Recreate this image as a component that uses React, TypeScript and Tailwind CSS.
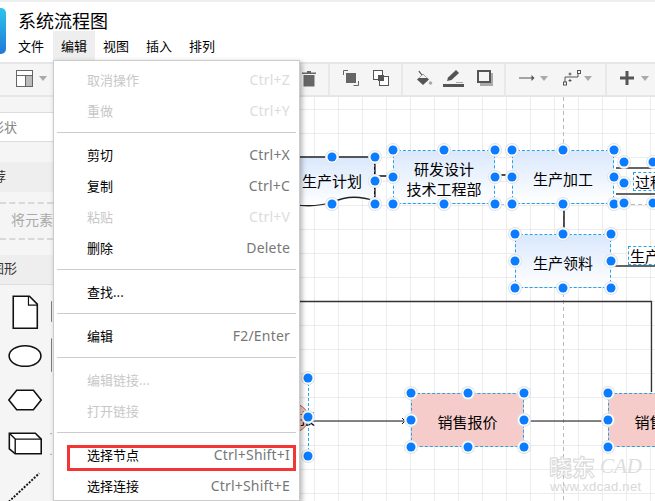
import React from "react";

const CJK = "font-['Noto_Sans_CJK_SC','Noto_Sans',sans-serif]";

function Caret() {
  return <span className="block w-0 h-0 border-x-[4px] border-x-transparent border-t-[5px] border-t-[#aaa]" />;
}

function Sep({ className }: { className: string }) {
  return <span className={"block w-[2px] self-stretch -mb-[3px] bg-[#e8e8e8] " + className} />;
}

function Handle({ className }: { className: string }) {
  return (
    <span
      className={
        "absolute w-[9px] h-[9px] rounded-full bg-[#0a7cff] -translate-x-1/2 -translate-y-1/2 shadow-[0_0_0_1.5px_#fff,0_0_0_2.5px_#e2e2e2] " +
        className
      }
    />
  );
}

function Handles() {
  return (
    <>
      <Handle className="left-0 top-0" />
      <Handle className="left-1/2 top-0" />
      <Handle className="left-full top-0" />
      <Handle className="left-0 top-1/2" />
      <Handle className="left-full top-1/2" />
      <Handle className="left-0 top-full" />
      <Handle className="left-1/2 top-full" />
      <Handle className="left-full top-full" />
    </>
  );
}

function Node({ box, face, children }: { box: string; face?: string; children?: React.ReactNode }) {
  return (
    <div className={"absolute " + box}>
      <div className={"absolute inset-0 flex items-center justify-center text-center text-[15px] leading-[20px] text-black " + (face ?? "")}>
        {children}
      </div>
      <Handles />
    </div>
  );
}

function MenuRow({ label, keys, disabled }: { label: string; keys?: string; disabled?: boolean }) {
  return (
    <div className="flex items-center justify-between h-[31px] pl-[33px] pr-[9px] text-[13px]">
      <span className={"relative -top-px " + (disabled ? "text-[#c8c8c8]" : "text-black")}>{label}</span>
      {keys && (
        <span className={"relative -top-px text-[14px] tracking-[0.2px] font-['Noto_Sans',sans-serif] " + (disabled ? "text-[#dcdcdc]" : "text-[#777]")}>
          {keys}
        </span>
      )}
    </div>
  );
}

function MenuSep() {
  return <div className="h-px bg-[#ccc] mt-[5px] mb-[7px] mx-[3px]" />;
}

function TopMenu({ label, className }: { label: string; className?: string }) {
  return (
    <span className={"flex items-center h-[29px] px-[8px] text-[13px] text-black " + (className ?? "mr-px")}>
      {label}
    </span>
  );
}

const blueFace = "border border-dashed border-[#29a3e8] bg-gradient-to-b from-[#dae8fc] to-white";
const redFace = "rounded-[6px] border border-dashed border-[#29a3e8] bg-[#f5ccc9]";

export default function App() {
  return (
    <div className={"relative w-[655px] h-[501px] overflow-hidden bg-white flex flex-col " + CJK}>
      {/* header */}
      <header className="h-[62px] shrink-0 border-t-2 border-[#eee] flex">
        <div className="w-[6px] h-[46px] mt-[6px] rounded-r-[5px] bg-gradient-to-b from-[#2fc4ea] to-[#2477d9]" />
        <div className="ml-[4px] flex flex-col">
          <div className="pl-[8px] mt-[6px] h-[23px] text-[18px] leading-[24px] text-black">系统流程图</div>
          <nav className="flex">
            <TopMenu label="文件" />
            <TopMenu label="编辑" className="bg-[#eee]" />
            <TopMenu label="视图" />
            <TopMenu label="插入" />
            <TopMenu label="排列" />
          </nav>
        </div>
      </header>

      {/* toolbar */}
      <div className="h-[35px] shrink-0 flex items-center pb-[3px] bg-[#f5f5f5] border-y-2 border-[#e6e6e6]">
        <svg className="ml-[16px]" width="17" height="17" viewBox="0 0 17 17">
          <rect x="0.5" y="0.5" width="16" height="16" fill="#fff" stroke="#666" />
          <rect x="10" y="5" width="6" height="11" fill="#bbb" />
          <path d="M0.5 5.5H16.5M9.5 5.5V16.5" stroke="#666" fill="none" />
        </svg>
        <span className="ml-[6px]"><Caret /></span>
        <svg className="ml-[255px]" width="14" height="17" viewBox="0 0 14 17">
          <path d="M0 2.5H14V4H0ZM5 1H9V2.5H5Z" fill="#666" />
          <path d="M1.5 5H12.5V16.5H1.5Z" fill="#666" />
        </svg>
        <Sep className="ml-[12px]" />
        <svg className="ml-[13px]" width="16" height="16" viewBox="0 0 16 16">
          <path d="M0.5 5V0.5H5M10.5 15.5H15.5V11" stroke="#666" fill="none" />
          <rect x="3" y="3" width="10" height="10" fill="#666" />
        </svg>
        <svg className="ml-[14px]" width="16" height="16" viewBox="0 0 16 16">
          <rect x="0.5" y="0.5" width="9" height="9" fill="#fff" stroke="#555" />
          <rect x="6.5" y="6.5" width="9" height="9" fill="#fff" stroke="#555" />
          <rect x="5" y="5" width="6" height="6" fill="#555" />
        </svg>
        <Sep className="ml-[12px]" />
        <svg className="ml-[13px]" width="17" height="17" viewBox="0 0 17 17">
          <path d="M7 4L13 9.5L7 15L1 9.5Z" fill="#555" />
          <path d="M3 1C4 3 6 5 8 7" stroke="#555" strokeWidth="1.2" fill="none" />
          <path d="M3 8L7 4.5L11 8Z" fill="#f5f5f5" />
          <circle cx="14.5" cy="13" r="1.8" fill="#aaa" />
        </svg>
        <svg className="ml-[10px]" width="22" height="18" viewBox="0 0 22 18">
          <rect x="0" y="15" width="21" height="3" fill="#555" />
          <path d="M4 12L5 8.5L13 1L16 4L8.5 11Z" fill="#555" />
          <path d="M13 13.5H20" stroke="#aaa" />
        </svg>
        <svg className="ml-[12px]" width="16" height="16" viewBox="0 0 16 16">
          <rect x="3" y="3" width="13" height="13" fill="#aaa" />
          <rect x="1" y="1" width="12" height="11" fill="#f5f5f5" stroke="#555" strokeWidth="2" />
        </svg>
        <Sep className="ml-[11px]" />
        <svg className="ml-[13px]" width="16" height="10" viewBox="0 0 16 10">
          <path d="M0 5H13" stroke="#555" />
          <path d="M12.5 2L15.5 5L12.5 8Z" fill="#555" />
        </svg>
        <span className="ml-[5px]"><Caret /></span>
        <svg className="ml-[15px]" width="18" height="16" viewBox="0 0 18 16">
          <rect x="0.5" y="12" width="3" height="3" fill="none" stroke="#555" />
          <rect x="14.5" y="0.5" width="3" height="3" fill="none" stroke="#555" />
          <path d="M2 12V7H15V3M7 2.5V5.5M5.5 4H8.5M7 9V12M5.5 10.5H8.5" stroke="#555" fill="none" />
        </svg>
        <span className="ml-[3px]"><Caret /></span>
        <Sep className="ml-[13px]" />
        <svg className="ml-[13px]" width="14" height="14" viewBox="0 0 14 14">
          <path d="M5.5 0H8.5V5.5H14V8.5H8.5V14H5.5V8.5H0V5.5H5.5Z" fill="#555" />
        </svg>
        <span className="ml-[7px]"><Caret /></span>
      </div>

      {/* body */}
      <div className="flex-1 flex min-h-0">
        <aside className="w-[54px] shrink-0 bg-[#f5f5f5] border-r border-[#ccc] overflow-hidden">
          <div className="h-[15px]" />
          <div className="h-[30px] bg-white border-y border-[#ddd] flex items-center text-[13px] text-[#888] -ml-[9px]">
            形状
          </div>
          <div className="h-[20px]" />
          <div className="h-[30px] bg-[#eee] flex items-center pb-[2px] -ml-[7px] text-[13px] text-[#333] whitespace-nowrap">荐</div>
          <div className="h-[10px]" />
          <div className="h-[38px] border-y-2 border-dashed border-[#d8d8d8] flex items-center pb-[3px] pl-[11px] text-[14px] text-[#aaa] whitespace-nowrap">
            将元素拖
          </div>
          <div className="h-[15px]" />
          <div className="h-[30px] bg-[#eee] border-b border-[#ddd] flex items-center pb-[3px] -ml-[9px] text-[13px] text-[#333] whitespace-nowrap">
            图形
          </div>
          <div className="mt-[5px] flex flex-col">
            <div className="h-[44px] flex items-center">
              <svg width="54" height="44" viewBox="0 0 54 44">
                <path d="M13.5 6H30L38 14V38.5H13.5Z" fill="#fff" stroke="#111" strokeWidth="1.6" />
                <path d="M29 6V15H38" fill="none" stroke="#111" strokeWidth="1.2" />
                <path d="M52.5 11V32" stroke="#777" strokeWidth="1" />
              </svg>
            </div>
            <div className="h-[44px] flex items-center">
              <svg width="54" height="44" viewBox="0 0 54 44">
                <ellipse cx="25.5" cy="22" rx="16.2" ry="10.5" fill="#fff" stroke="#111" strokeWidth="1.6" />
                <path d="M52.5 4V38" stroke="#777" strokeWidth="1" />
              </svg>
            </div>
            <div className="h-[44px] flex items-center">
              <svg width="54" height="44" viewBox="0 0 54 44">
                <path d="M9 22L17 12H34L42 22L34 32H17Z" fill="#fff" stroke="#111" strokeWidth="1.6" />
              </svg>
            </div>
            <div className="h-[44px] flex items-center">
              <svg width="54" height="44" viewBox="0 0 54 44">
                <path d="M9.5 11H36L42 17V32H15.5L9.5 27Z" fill="#fff" stroke="#111" strokeWidth="1.6" />
                <path d="M9.5 11L15.5 17V32M15.5 17H42" fill="none" stroke="#111" strokeWidth="1.4" />
                <path d="M52 11V12M52 32V33" stroke="#555" strokeWidth="1" />
              </svg>
            </div>
            <div className="h-[44px] flex items-center">
              <svg width="54" height="44" viewBox="0 0 54 44">
                <path d="M9 36L40 7" stroke="#111" strokeWidth="2" strokeDasharray="2 1.5" fill="none" />
              </svg>
            </div>
          </div>
        </aside>

        {/* canvas */}
        <main className="relative flex-1 overflow-hidden bg-white bg-[linear-gradient(#ececec_1px,transparent_1px),linear-gradient(90deg,#ececec_1px,transparent_1px)] bg-[size:24px_24px] bg-[position:20px_12px]">
          <svg className="absolute -left-[54px] -top-[97px] w-[655px] h-[501px]" viewBox="0 0 655 501">
            <defs>
              <linearGradient id="wave" x1="0" y1="0" x2="0" y2="1">
                <stop offset="0" stopColor="#dae8fc" />
                <stop offset="1" stopColor="#ffffff" />
              </linearGradient>
            </defs>
            <path d="M563.5 97V501" stroke="#bbb" strokeDasharray="4 3" fill="none" />
            <path d="M500 204.5H510M617 204.5H655" stroke="#bbb" strokeDasharray="4 3" fill="none" />
            <path d="M289 157H375V201Q352 193 333 202Q310 209 289 203Z" fill="url(#wave)" stroke="#222" strokeWidth="1.3" />
            <path d="M378 176H390M499 175H508M564 208V230" stroke="#111" strokeWidth="1.4" fill="none" />
            <path d="M616 168H655M616 194H655M614 266H655" stroke="#333" strokeWidth="1.4" fill="none" />
            <path d="M300 301.5H651.5V392" stroke="#333" strokeWidth="1.3" fill="none" />
            <ellipse cx="270" cy="418" rx="39" ry="20" fill="#f5ccc9" stroke="#b85450" />
            <path d="M312 421H405M530 421H605" stroke="#111" strokeWidth="1.2" fill="none" />
            <path d="M402 418L405 421L402 424M602 418L605 421L602 424" stroke="#111" fill="none" />
          </svg>

          <span className="absolute left-[246px] top-[311px] text-[15px] leading-[20px] text-black">报</span>

          <Node box="left-[235px] top-[60px] w-[86px] h-[47px]" face="border border-dashed border-transparent border-r-[#111]">
            <span className="mt-[1px] whitespace-nowrap">生产计划</span>
          </Node>
          <Node box="left-[339px] top-[53px] w-[102px] h-[54px]" face={blueFace}>
            <span className="mt-[3px]">研发设计<br />技术工程部</span>
          </Node>
          <Node box="left-[458px] top-[53px] w-[102px] h-[54px]" face={blueFace}>
            <span className="mt-[3px]">生产加工</span>
          </Node>
          <Node box="left-[461px] top-[137px] w-[96px] h-[54px]" face={blueFace}>
            <span className="mt-[3px]">生产领料</span>
          </Node>
          <Node box="left-[570px] top-[65px] w-[58px] h-[41px]" />
          <div className="absolute left-[579px] top-[75px] w-[60px] h-[19px] border border-dashed border-[#29a3e8] text-[15px] leading-[17px] text-black whitespace-nowrap pl-px">
            过程
          </div>
          <div className="absolute left-[574px] top-[149px] w-[60px] h-[19px] border border-dashed border-[#29a3e8] text-[15px] leading-[17px] text-black whitespace-nowrap pl-px bg-white">
            生产
          </div>
          <Node box="left-[357px] top-[296px] w-[113px] h-[54px]" face={redFace}>
            <span className="mt-[3px]">销售报价</span>
          </Node>
          <Node box="left-[554px] top-[296px] w-[113px] h-[54px]" face={redFace}>
            <span className="mt-[3px] whitespace-nowrap">销售合同</span>
          </Node>
          <div className="absolute left-[181px] top-[281px] w-[74px] h-[78px] border-r border-dashed border-[#29a3e8]">
            <Handle className="left-full top-0" />
            <Handle className="left-full top-1/2" />
            <Handle className="left-full top-full" />
          </div>

          {/* watermark */}
          <div className="absolute left-[495px] top-[357px] flex items-center whitespace-nowrap">
            <span className="text-[23px] leading-[24px] font-bold text-white [-webkit-text-stroke:1px_#d8d8d8]">晓东</span>
            <span className="ml-[5px] font-['Liberation_Serif',serif] italic text-[21px] leading-[24px] text-[#ddd]">CAD</span>
          </div>
          <div className="absolute left-[496px] top-[383px] font-['Liberation_Sans',sans-serif] text-[13px] leading-[14px] tracking-[0.3px] text-[#d8d8d8] whitespace-nowrap">
            www.xdcad.net
          </div>
        </main>
      </div>

      {/* dropdown menu */}
      <div className="absolute left-[53px] top-[60px] w-[247px] h-[441px] bg-white border border-[#ccc] pt-[4px] shadow-[2px_2px_5px_rgba(0,0,0,0.3)]">
        <MenuRow label="取消操作" keys="Ctrl+Z" disabled />
        <MenuRow label="重做" keys="Ctrl+Y" disabled />
        <MenuSep />
        <MenuRow label="剪切" keys="Ctrl+X" />
        <MenuRow label="复制" keys="Ctrl+C" />
        <MenuRow label="粘贴" keys="Ctrl+V" disabled />
        <MenuRow label="删除" keys="Delete" />
        <MenuSep />
        <MenuRow label="查找..." />
        <MenuSep />
        <MenuRow label="编辑" keys="F2/Enter" />
        <MenuSep />
        <MenuRow label="编辑链接..." disabled />
        <MenuRow label="打开链接" disabled />
        <MenuSep />
        <MenuRow label="选择节点" keys="Ctrl+Shift+I" />
        <MenuRow label="选择连接" keys="Ctrl+Shift+E" />
        <div className="absolute left-[13px] top-[384px] w-[229px] h-[26px] border-[3px] border-[#f33535]" />
      </div>
    </div>
  );
}
